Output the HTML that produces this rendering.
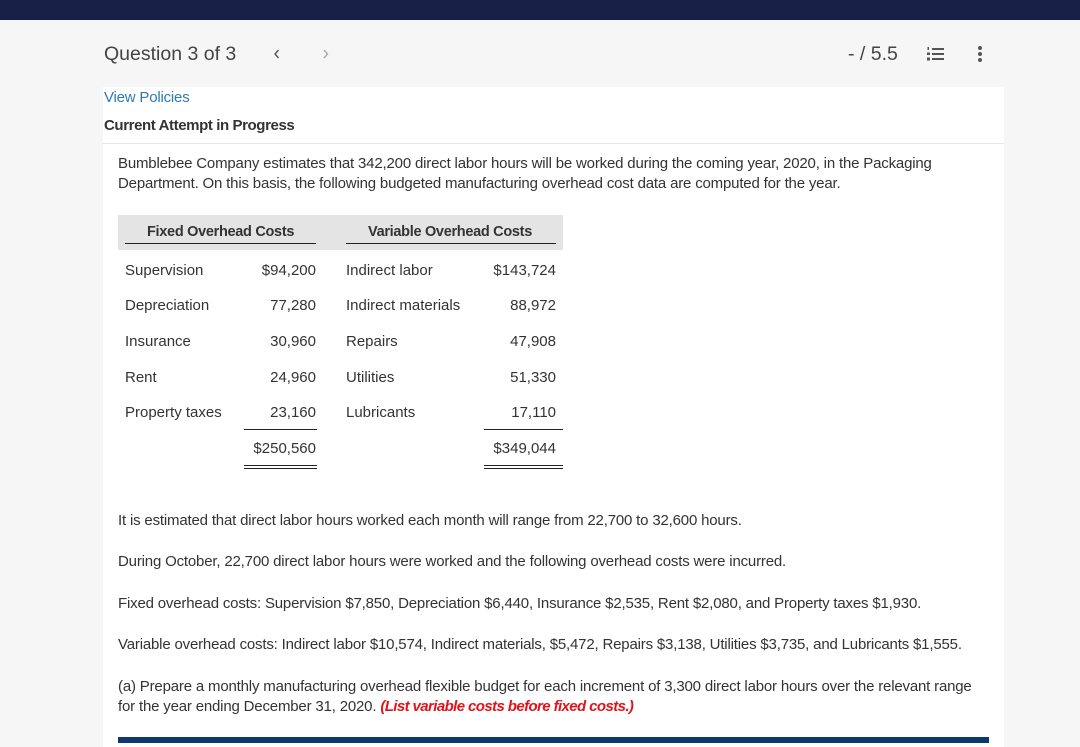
<!DOCTYPE html>
<html><head><meta charset="utf-8"><style>
*{margin:0;padding:0;box-sizing:border-box}
body{width:1080px;height:743px;overflow:hidden;background:#f6f6f7;font-family:"Liberation Sans",sans-serif;color:#333;position:relative}
.top{position:absolute;left:0;top:0;width:1080px;height:20px;background:#161f46}
.a{position:absolute;white-space:nowrap}
.card{position:absolute;left:103px;top:87px;width:901px;height:660px;background:#fff}
.p{font-size:15px;letter-spacing:-0.18px;color:#333}
.th{position:absolute;left:118px;top:215px;width:445px;height:35px;background:#e4e4e4}
.t{font-size:15px;color:#333}
.r{text-align:right}
.ln{position:absolute;height:1px;background:#222}
</style></head><body>
<div class="top"></div>
<div class="a" style="left:104px;top:43px;font-size:19.5px;color:#444">Question 3 of 3</div>
<svg class="a" style="left:272px;top:47px" width="10" height="14"><path d="M6.5 3 L3 7 L6.5 11" stroke="#555" stroke-width="1.4" fill="none"/></svg>
<svg class="a" style="left:321px;top:47px" width="10" height="14"><path d="M3 3 L6.5 7 L3 11" stroke="#aaa" stroke-width="1.4" fill="none"/></svg>
<div class="a" style="left:848px;top:43px;font-size:19.5px;color:#444">- / 5.5</div>
<svg class="a" style="left:926px;top:46px" width="20" height="16" viewBox="0 0 20 16"><g fill="#555"><rect x="6" y="2" width="12" height="2"/><rect x="6" y="7" width="12" height="2"/><rect x="6" y="12" width="12" height="2"/><rect x="1.5" y="1" width="1.5" height="3"/><rect x="1" y="6.5" width="3" height="2.5"/><rect x="1" y="11.5" width="3" height="3"/></g></svg>
<svg class="a" style="left:977px;top:45px" width="6" height="18"><g fill="#555"><circle cx="3" cy="3" r="2"/><circle cx="3" cy="9" r="2"/><circle cx="3" cy="15" r="2"/></g></svg>
<div class="card"></div>
<div class="a" style="left:104px;top:89px;font-size:15px;color:#2a7ab8;letter-spacing:-0.2px">View Policies</div>
<div class="a" style="left:104px;top:117px;font-size:15px;font-weight:bold;color:#333;letter-spacing:-0.4px">Current Attempt in Progress</div>
<div class="a" style="left:103px;top:143px;width:901px;height:1px;background:#e6e6e6"></div>
<div class="a p" style="left:118px;top:155px">Bumblebee Company estimates that 342,200 direct labor hours will be worked during the coming year, 2020, in the Packaging</div>
<div class="a p" style="left:118px;top:175px">Department. On this basis, the following budgeted manufacturing overhead cost data are computed for the year.</div>
<div class="th"></div>
<div class="a t" style="left:147px;top:224px;font-weight:bold;font-size:14.5px;letter-spacing:-0.3px">Fixed Overhead Costs</div>
<div class="a t" style="left:368px;top:224px;font-weight:bold;font-size:14.5px;letter-spacing:-0.3px">Variable Overhead Costs</div>
<div class="ln" style="left:125px;top:243px;width:191px"></div>
<div class="ln" style="left:346px;top:243px;width:210px"></div>
<div class="a t" style="left:125px;top:262px">Supervision</div><div class="a t r" style="left:216px;width:100px;top:262px">$94,200</div><div class="a t" style="left:346px;top:262px">Indirect labor</div><div class="a t r" style="left:456px;width:100px;top:262px">$143,724</div>
<div class="a t" style="left:125px;top:297px">Depreciation</div><div class="a t r" style="left:216px;width:100px;top:297px">77,280</div><div class="a t" style="left:346px;top:297px">Indirect materials</div><div class="a t r" style="left:456px;width:100px;top:297px">88,972</div>
<div class="a t" style="left:125px;top:333px">Insurance</div><div class="a t r" style="left:216px;width:100px;top:333px">30,960</div><div class="a t" style="left:346px;top:333px">Repairs</div><div class="a t r" style="left:456px;width:100px;top:333px">47,908</div>
<div class="a t" style="left:125px;top:369px">Rent</div><div class="a t r" style="left:216px;width:100px;top:369px">24,960</div><div class="a t" style="left:346px;top:369px">Utilities</div><div class="a t r" style="left:456px;width:100px;top:369px">51,330</div>
<div class="a t" style="left:125px;top:404px">Property taxes</div><div class="a t r" style="left:216px;width:100px;top:404px">23,160</div><div class="a t" style="left:346px;top:404px">Lubricants</div><div class="a t r" style="left:456px;width:100px;top:404px">17,110</div>
<div class="ln" style="left:244px;top:429px;width:73px"></div>
<div class="ln" style="left:484px;top:429px;width:79px"></div>
<div class="a t r" style="left:216px;width:100px;top:440px">$250,560</div>
<div class="a t r" style="left:456px;width:100px;top:440px">$349,044</div>
<div class="ln" style="left:244px;top:465px;width:73px"></div><div class="ln" style="left:244px;top:468px;width:73px"></div>
<div class="ln" style="left:484px;top:465px;width:79px"></div><div class="ln" style="left:484px;top:468px;width:79px"></div>
<div class="a p" style="left:118px;top:512px">It is estimated that direct labor hours worked each month will range from 22,700 to 32,600 hours.</div>
<div class="a p" style="left:118px;top:553px">During October, 22,700 direct labor hours were worked and the following overhead costs were incurred.</div>
<div class="a p" style="left:118px;top:595px">Fixed overhead costs: Supervision $7,850, Depreciation $6,440, Insurance $2,535, Rent $2,080, and Property taxes $1,930.</div>
<div class="a p" style="left:118px;top:636px">Variable overhead costs: Indirect labor $10,574, Indirect materials, $5,472, Repairs $3,138, Utilities $3,735, and Lubricants $1,555.</div>
<div class="a p" style="left:118px;top:678px">(a) Prepare a monthly manufacturing overhead flexible budget for each increment of 3,300 direct labor hours over the relevant range</div>
<div class="a p" style="left:118px;top:698px">for the year ending December 31, 2020. <b><i style="color:#e0151b;letter-spacing:-0.6px">(List variable costs before fixed costs.)</i></b></div>
<div class="a" style="left:118px;top:737px;width:871px;height:6px;background:#0e3a6b"></div>
</body></html>
